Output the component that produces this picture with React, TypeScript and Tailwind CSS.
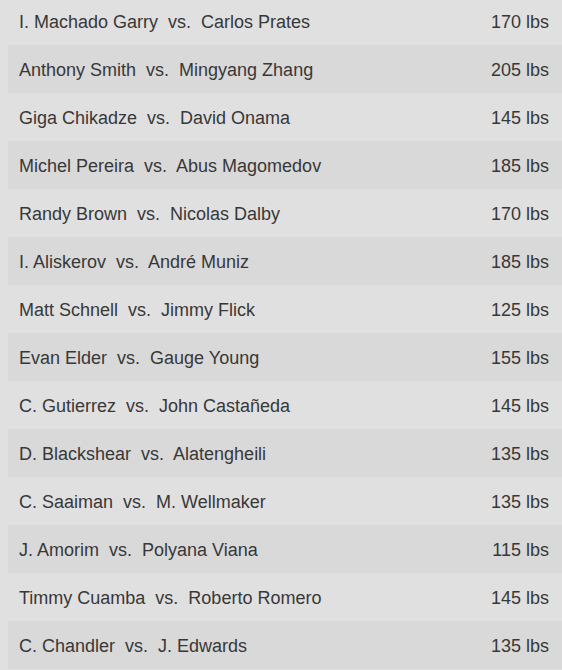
import React from 'react';

const fights = [
  { a: 'I. Machado Garry', b: 'Carlos Prates', w: '170 lbs' },
  { a: 'Anthony Smith', b: 'Mingyang Zhang', w: '205 lbs' },
  { a: 'Giga Chikadze', b: 'David Onama', w: '145 lbs' },
  { a: 'Michel Pereira', b: 'Abus Magomedov', w: '185 lbs' },
  { a: 'Randy Brown', b: 'Nicolas Dalby', w: '170 lbs' },
  { a: 'I. Aliskerov', b: 'André Muniz', w: '185 lbs' },
  { a: 'Matt Schnell', b: 'Jimmy Flick', w: '125 lbs' },
  { a: 'Evan Elder', b: 'Gauge Young', w: '155 lbs' },
  { a: 'C. Gutierrez', b: 'John Castañeda', w: '145 lbs' },
  { a: 'D. Blackshear', b: 'Alatengheili', w: '135 lbs' },
  { a: 'C. Saaiman', b: 'M. Wellmaker', w: '135 lbs' },
  { a: 'J. Amorim', b: 'Polyana Viana', w: '115 lbs' },
  { a: 'Timmy Cuamba', b: 'Roberto Romero', w: '145 lbs' },
  { a: 'C. Chandler', b: 'J. Edwards', w: '135 lbs' },
];

export default function App() {
  return (
    <div
      className="min-h-screen bg-[#e0e0e0] text-[#383838] overflow-hidden"
      style={{ fontFamily: '"Liberation Sans", Arial, sans-serif' }}
    >
      {/* fight card list */}
      <div className="ml-2 -mt-[3px]">
        {fights.map((f, i) => (
          <div
            key={f.a}
            className={`h-12 flex items-center justify-between pt-[2px] pl-[11px] pr-[13px] text-[18px] ${
              i % 2 === 1 ? 'bg-[#d9d9d9]' : ''
            }`}
          >
            <span className="whitespace-pre">{`${f.a}  vs.  ${f.b}`}</span>
            <span>{f.w}</span>
          </div>
        ))}
      </div>
    </div>
  );
}
